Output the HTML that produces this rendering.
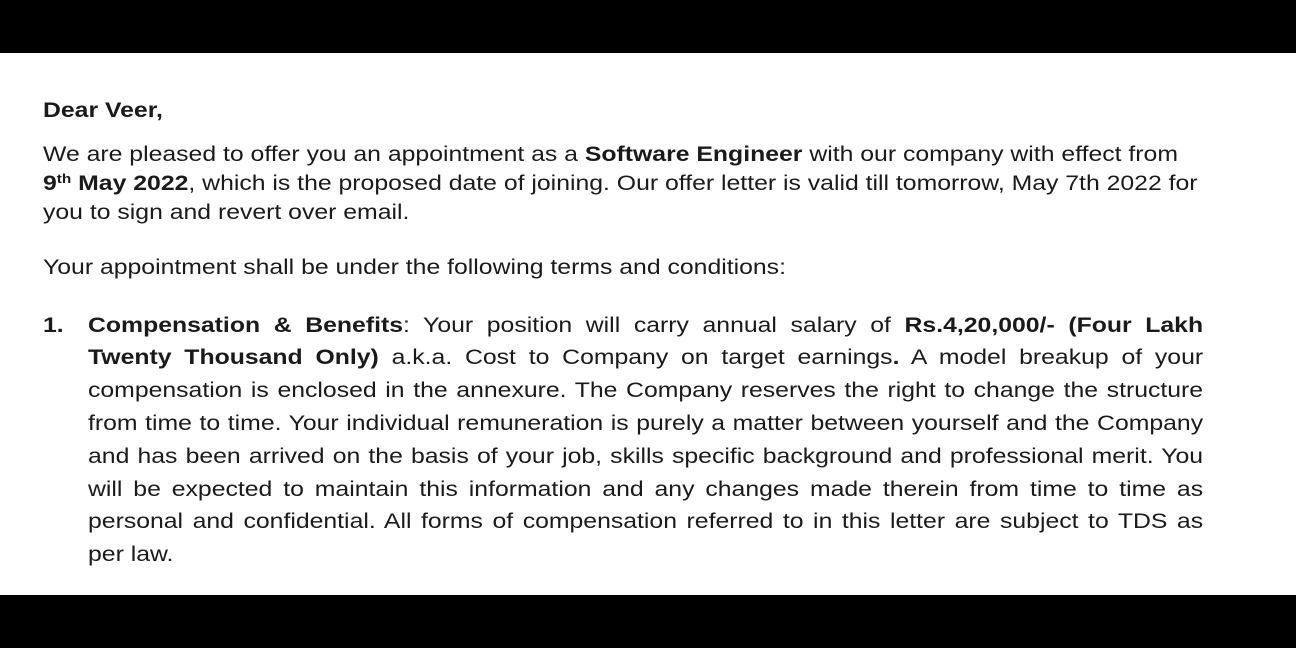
<!DOCTYPE html>
<html><head><meta charset="utf-8"><style>
html,body{margin:0;padding:0}
body{width:1296px;height:648px;background:#000;position:relative;overflow:hidden;font-family:"Liberation Sans",Arial,sans-serif;color:#1a1a1a}
.page{position:absolute;left:0;top:53px;width:1296px;height:542px;background:#fff}
.l{position:absolute;font-size:21px;line-height:22px;white-space:nowrap;transform:scaleX(1.18);transform-origin:0 0}
.j{width:945px;left:88px;text-align:justify;text-align-last:justify;white-space:normal;height:22px;overflow:hidden}
b{font-weight:bold}
sup{font-size:13px;line-height:0;vertical-align:7px;font-weight:bold}
</style></head><body>
<div class="page"></div>
<div class="l" style="left:43px;top:100px"><b>Dear Veer,</b></div>
<div class="l" style="left:43px;top:144px">We are pleased to offer you an appointment as a <b>Software Engineer</b> with our company with effect from</div>
<div class="l" style="left:43px;top:173px"><b>9<sup>th</sup> May 2022</b>, which is the proposed date of joining. Our offer letter is valid till tomorrow, May 7th 2022 for</div>
<div class="l" style="left:43px;top:202px">you to sign and revert over email.</div>
<div class="l" style="left:43px;top:257px">Your appointment shall be under the following terms and conditions:</div>
<div class="l" style="left:43px;top:315px"><b>1.</b></div>
<div class="l j" style="top:315px"><b>Compensation &amp; Benefits</b>: Your position will carry annual salary of <b>Rs.4,20,000/- (Four Lakh</b></div>
<div class="l j" style="top:347px"><b>Twenty Thousand Only)</b> a.k.a. Cost to Company on target earnings<b>.</b> A model breakup of your</div>
<div class="l j" style="top:380px">compensation is enclosed in the annexure. The Company reserves the right to change the structure</div>
<div class="l j" style="top:413px">from time to time. Your individual remuneration is purely a matter between yourself and the Company</div>
<div class="l j" style="top:446px">and has been arrived on the basis of your job, skills specific background and professional merit. You</div>
<div class="l j" style="top:479px">will be expected to maintain this information and any changes made therein from time to time as</div>
<div class="l j" style="top:511px">personal and confidential. All forms of compensation referred to in this letter are subject to TDS as</div>
<div class="l" style="left:88px;top:544px">per law.</div>
</body></html>
